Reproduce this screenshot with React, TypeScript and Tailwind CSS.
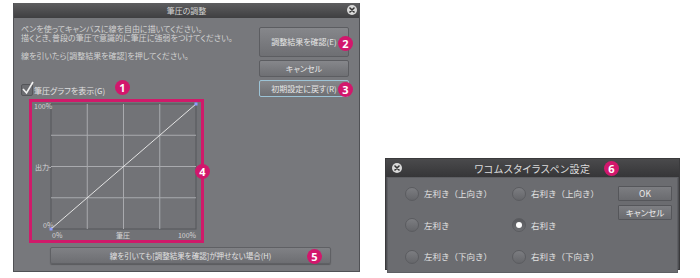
import React from "react";

const jp = "font-['Noto_Sans_CJK_JP',sans-serif] [font-feature-settings:'palt']";

function Badge({ n, className }: { n: string; className: string }) {
  return (
    <span
      className={`absolute w-[15px] h-[15px] rounded-full bg-[#d2176c] text-white text-[11px] leading-none font-bold font-['Open_Sans',sans-serif] flex items-center justify-center ${className}`}
    >
      {n}
    </span>
  );
}

function CloseDot({ className }: { className: string }) {
  return (
    <span className={`absolute w-[10px] h-[10px] rounded-full bg-[#d9d9d9] flex items-center justify-center ${className}`}>
      <svg width="6" height="6" viewBox="0 0 6 6">
        <path d="M1 1L5 5M5 1L1 5" stroke="#333" strokeWidth="1.6" strokeLinecap="round" />
      </svg>
    </span>
  );
}

function PressureGraph() {
  const x0 = 19, y0 = 2, w = 145, h = 125;
  const xs = [1, 2, 3].map((k) => x0 + (w * k) / 4);
  const ys = [1, 2, 3].map((k) => y0 + (h * k) / 4);
  return (
    <svg width="169" height="138" viewBox="0 0 169 138" className="block">
      <rect x={x0} y={y0} width={w} height={h} fill="#727377" stroke="#55565a" />
      {xs.map((x) => (
        <line key={x} x1={x} y1={y0} x2={x} y2={y0 + h} stroke="#a9aaae" strokeWidth="1" />
      ))}
      {ys.map((y) => (
        <line key={y} x1={x0} y1={y} x2={x0 + w} y2={y} stroke="#a9aaae" strokeWidth="1" />
      ))}
      <line x1={x0} y1={y0 + h} x2={x0 + w} y2={y0} stroke="#e4e4e4" strokeWidth="1" />
      <rect x={x0 - 1.5} y={y0 + h - 1.5} width="3" height="3" fill="#8d9cff" />
      <rect x={x0 + w - 1.5} y={y0 - 1.5} width="3" height="3" fill="#8d9cff" />
      <g fill="#d6d6d6" fontSize="7" fontFamily="'Noto Sans CJK JP', sans-serif">
        <text x="2" y="7">100%</text>
        <text x="3" y="68">出力</text>
        <line x1="16" y1="65.5" x2={x0} y2="65.5" stroke="#a9aaae" />
        <text x="11" y="126">0%</text>
        <text x="20" y="136">0%</text>
        <text x="91" y="136" textAnchor="middle">筆圧</text>
        <text x="164" y="136" textAnchor="end">100%</text>
      </g>
    </svg>
  );
}

function PressureDialog() {
  const btn =
    "relative w-[90px] flex items-center justify-center rounded-[2px] border border-[#5c5d61] bg-gradient-to-b from-[#86878b] to-[#6e6f73] text-[8px] text-[#e6e6e6]";
  return (
    <div className={`relative w-[347px] h-[269px] bg-[#77787c] border-x border-b border-[#505155] flex flex-col ${jp}`}>
      <div className="relative h-[15px] shrink-0 bg-gradient-to-b from-[#5e5e60] to-[#3f3f41] flex items-center justify-center">
        <span className="text-[8px] text-[#d4d4d4]">筆圧の調整</span>
        <CloseDot className="right-[2px] top-[2px]" />
      </div>

      <div className="flex pl-[7px] pt-[6px]">
        <div className="flex-1 flex flex-col text-[8px] leading-[9px] text-[#d2d2d2]">
          <p>ペンを使ってキャンバスに線を自由に描いてください。</p>
          <p>描くとき、普段の筆圧で意識的に筆圧に強弱をつけてください。</p>
          <p className="mt-[9px]">線を引いたら[調整結果を確認]を押してください。</p>
          <div className="relative mt-[24px] flex items-center gap-[1px]">
            <span className="relative w-[12px] h-[12px] rounded-[2px] border border-[#55565a] bg-[#6c6d71]">
              <svg width="14" height="14" viewBox="0 0 14 14" className="absolute -left-[1px] -top-[4px]">
                <path d="M2 8L5.5 12L12 1" stroke="#f2f2f2" strokeWidth="1.6" fill="none" />
              </svg>
            </span>
            <span className="text-[8px] text-[#e0e0e0]">筆圧グラフを表示(G)</span>
            <Badge n="1" className="left-[94px] -top-[4px]" />
          </div>
        </div>
        <div className="w-[100px] flex flex-col gap-[3px] pt-[3px]">
          <div className={`${btn} h-[30px]`}>
            調整結果を確認(E)
            <Badge n="2" className="-right-[5px] top-[8px]" />
          </div>
          <div className={`${btn} h-[17px]`}>キャンセル</div>
          <div className={`${btn} h-[17px] border-[#9cc3d6]`}>
            初期設定に戻す(R)
            <Badge n="3" className="-right-[5px] top-[1px]" />
          </div>
        </div>
      </div>

      <div className="relative ml-[15px] mt-[2px] w-[175px] h-[144px] border-[3px] border-[#d01a6a] bg-[#717276]">
        <PressureGraph />
        <Badge n="4" className="-right-[9px] top-[62px]" />
      </div>

      <div className="relative ml-[36px] mt-[4px] w-[281px] h-[17px] rounded-[2px] border border-[#5f6064] bg-gradient-to-b from-[#808185] to-[#6d6e72] shadow-[0_1px_1px_rgba(0,0,0,0.25)] flex items-center justify-center text-[7.5px] text-[#e4e4e4]">
        線を引いても[調整結果を確認]が押せない場合(H)
        <Badge n="5" className="right-[8px] top-[1px]" />
      </div>
    </div>
  );
}

function Radio({ label, checked }: { label: string; checked?: boolean }) {
  return (
    <div className="flex items-center gap-[5px]">
      <span
        className={`w-[14px] h-[14px] rounded-full border border-[#5b5c60] flex items-center justify-center ${
          checked ? "bg-gradient-to-b from-[#58595d] to-[#6e6f73]" : "bg-gradient-to-b from-[#7c7d81] to-[#65666a]"
        }`}
      >
        {checked && <span className="w-[6px] h-[6px] rounded-full bg-white" />}
      </span>
      <span className="text-[8.5px] text-[#e2e2e2] [font-feature-settings:normal]">{label}</span>
    </div>
  );
}

function WacomDialog() {
  const btn =
    "w-[54px] h-[15px] flex items-center justify-center rounded-[1px] border border-[#55565a] bg-gradient-to-b from-[#7d7e82] to-[#6a6b6f] text-[8.5px] text-[#ececec]";
  return (
    <div className={`w-[295px] h-[112px] flex flex-col bg-[#4d4e52] border border-[#3a3a3c] ${jp}`}>
      <div className="relative h-[18px] shrink-0 bg-gradient-to-b from-[#4a4a4c] to-[#363638] flex items-center justify-center">
        <span className="text-[10px] text-[#dcdcdc] tracking-[0.5px]">ワコムスタイラスペン設定</span>
        <Badge n="6" className="left-[218px] top-[2px]" />
        <CloseDot className="left-[6px] top-[4px]" />
      </div>
      <div className="flex-1 mx-[1px] mb-[1px] border border-[#5e5f63] bg-[#6b6c70] flex">
        <div className="grid grid-cols-[107px_107px] grid-rows-[31px_32px_31px] pl-[17px]">
          <Radio label="左利き（上向き）" />
          <Radio label="右利き（上向き）" />
          <Radio label="左利き" />
          <Radio label="右利き" checked />
          <Radio label="左利き（下向き）" />
          <Radio label="右利き（下向き）" />
        </div>
        <div className="-ml-[1px] pt-[8px] flex flex-col gap-[4px]">
          <div className={btn}>OK</div>
          <div className={btn}>キャンセル</div>
        </div>
      </div>
    </div>
  );
}

export default function App() {
  return (
    <div className="w-[700px] h-[278px] bg-white flex items-start pl-[13px] pt-[3px] overflow-hidden">
      <PressureDialog />
      <div className="ml-[25px] mt-[155px]">
        <WacomDialog />
      </div>
    </div>
  );
}
